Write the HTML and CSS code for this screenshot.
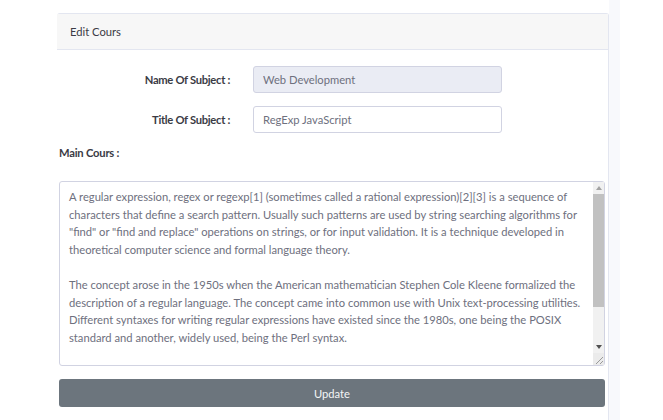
FILE: index.html
```html
<!DOCTYPE html>
<html>
<head>
<meta charset="utf-8">
<link rel="stylesheet" href="styles.css">
</head>
<body>
<div class="page">
  <div class="card">
    <div class="card-header">Edit Cours</div>
    <div class="card-body">
      <div class="form-row">
        <label class="label">Name Of Subject :</label>
        <input class="input input-disabled" type="text" value="Web Development" disabled>
      </div>
      <div class="form-row">
        <label class="label">Title Of Subject :</label>
        <input class="input" type="text" value="RegExp JavaScript">
      </div>
      <div class="main-label">Main Cours :</div>
      <div class="textarea-wrap">
        <textarea class="textarea">A regular expression, regex or regexp[1] (sometimes called a rational expression)[2][3] is a sequence of
characters that define a search pattern. Usually such patterns are used by string searching algorithms for
"find" or "find and replace" operations on strings, or for input validation. It is a technique developed in
theoretical computer science and formal language theory.

The concept arose in the 1950s when the American mathematician Stephen Cole Kleene formalized the
description of a regular language. The concept came into common use with Unix text-processing utilities.
Different syntaxes for writing regular expressions have existed since the 1980s, one being the POSIX
standard and another, widely used, being the Perl syntax.

Regular expressions are used in search engines, search and replace dialogs of word processors and
text editors, in text processing utilities such as sed and AWK and in lexical analysis. Many
programming languages provide regex capabilities either built-in or via libraries.</textarea>
        <div class="scrollbar">
          <div class="sb-btn">
            <svg width="6" height="4" viewBox="0 0 6 4"><path d="M0 4L3 0L6 4Z" fill="#a3a3a3"/></svg>
          </div>
          <div class="sb-track"><div class="sb-thumb"></div></div>
          <div class="sb-btn">
            <svg width="6" height="4" viewBox="0 0 6 4"><path d="M0 0L3 4L6 0Z" fill="#505050"/></svg>
          </div>
          <div class="sb-corner">
            <svg width="11" height="12" viewBox="0 0 11 12"><path d="M10 4L3 11M10 8L7 11" stroke="#9a9a9a" stroke-width="1"/></svg>
          </div>
        </div>
      </div>
      <button class="btn">Update</button>
    </div>
  </div>
  <div class="strip"></div>
</div>
</body>
</html>
```
FILE: styles.css
```css
html, body {
  margin: 0;
  padding: 0;
  background: #ffffff;
  height: 100%;
  overflow: hidden;
}
body {
  font-family: "Lato", "Noto Sans", sans-serif;
  font-size: 11.2px;
  color: #858796;
}
.page {
  display: flex;
  align-items: stretch;
  height: 100%;
  padding-left: 57px;
}
.card {
  width: 552px;
  margin-top: 13px;
  border: 1px solid #e3e6f0;
  border-bottom: none;
  border-left: none;
  border-radius: 3px 3px 0 0;
  box-sizing: border-box;
  background: #fff;
}
.card-header {
  height: 36px;
  box-sizing: border-box;
  background: #f7f7f7;
  border-bottom: 1px solid #e3e6f0;
  padding: 0 13px;
  display: flex;
  align-items: center;
  color: #3a3b45;
  font-size: 11.2px;
}
.card-body {
  padding: 16px 3px 0 2px;
  display: flex;
  flex-direction: column;
}
.form-row {
  display: grid;
  grid-template-columns: 171px 249px;
  column-gap: 23px;
  align-items: center;
  margin-bottom: 13px;
}
.label {
  text-align: right;
  font-weight: bold;
  color: #3a3b45;
  font-size: 11.2px;
  letter-spacing: -0.3px;
}
.input {
  height: 27px;
  box-sizing: border-box;
  border: 1px solid #d1d3e2;
  border-radius: 3px;
  padding: 0 9px;
  font-family: inherit;
  font-size: 11.2px;
  color: #6e707e;
  background: #fff;
  outline: none;
}
.input-disabled {
  background: #eaecf4;
  color: #6e707e;
}
.main-label {
  font-weight: bold;
  color: #3a3b45;
  font-size: 11.2px;
  letter-spacing: -0.2px;
  margin-top: -2px;
  height: 18px;
  line-height: 18px;
}
.textarea-wrap {
  position: relative;
  margin-top: 19px;
  height: 185px;
  display: flex;
}
.textarea {
  flex: 1;
  height: 185px;
  box-sizing: border-box;
  border: 1px solid #d1d3e2;
  border-radius: 3px;
  padding: 6px 9px 6px 9px;
  font-family: inherit;
  font-size: 11.2px;
  line-height: 17.6px;
  color: #6e707e;
  white-space: pre;
  overflow: hidden;
  resize: none;
  outline: none;
}
.scrollbar {
  position: absolute;
  top: 1px;
  right: 1px;
  bottom: 1px;
  width: 11px;
  display: flex;
  flex-direction: column;
  background: #f1f1f1;
}
.sb-btn {
  height: 12px;
  display: flex;
  align-items: center;
  justify-content: center;
  flex: none;
}
.sb-track {
  flex: 1;
  display: flex;
  flex-direction: column;
}
.sb-thumb {
  height: 113px;
  background: #c1c1c1;
}
.sb-corner {
  height: 12px;
  flex: none;
  background: #ebebeb;
  display: flex;
}
.btn {
  margin-top: 13px;
  height: 28px;
  border: none;
  border-radius: 3px;
  background: #6c757d;
  color: #f4f5f6;
  font-family: inherit;
  font-size: 11.2px;
}
.strip {
  width: 11px;
  background: #f8f9fc;
}
```
